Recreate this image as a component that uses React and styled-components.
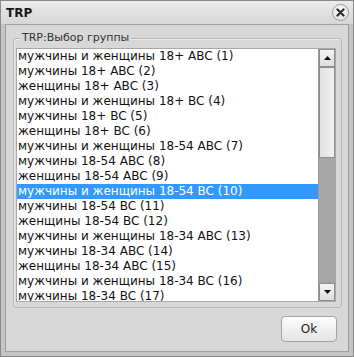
import styled, { createGlobalStyle } from "styled-components";
import { useState } from "react";

const GlobalStyle = createGlobalStyle`
  html, body {
    margin: 0;
    padding: 0;
    background: #ffffff;
  }
  * {
    box-sizing: border-box;
  }
`;

const ages = ["18+", "18-54", "18-34", "25-54", "35+", "45+", "55+"];
const genders = ["мужчины и женщины", "мужчины", "женщины"];

// собираем список групп: для каждого возраста сначала ABC, потом BC
const buildGroups = () => {
  const list = [];
  ages.forEach((age) => {
    ["ABC", "BC"].forEach((cls) => {
      genders.forEach((g) => {
        list.push(`${g} ${age} ${cls} (${list.length + 1})`);
      });
    });
  });
  return list;
};

const groups = buildGroups();

const App = () => {
  const [selected, setSelected] = useState(9);

  return (
    <>
      <GlobalStyle />
      <Window>
        <TitleBar>
          <Title>TRP</Title>
          <CloseButton>
            <svg width="9" height="9" viewBox="0 0 9 9">
              <path
                d="M1.5 1.5 L7.5 7.5 M7.5 1.5 L1.5 7.5"
                stroke="#2a2a2a"
                strokeWidth="2.2"
                strokeLinecap="round"
              />
            </svg>
          </CloseButton>
        </TitleBar>
        <Body>
          <GroupBox>
            <Legend>TRP:Выбор группы</Legend>
            <ListBox>
              <Items>
                {groups.map((name, i) => (
                  <Item
                    key={name}
                    $active={i === selected}
                    onClick={() => setSelected(i)}
                  >
                    {name}
                  </Item>
                ))}
              </Items>
              <ScrollBar>
                <ArrowButton>
                  <svg width="7" height="4" viewBox="0 0 7 4">
                    <path d="M0 4 L3.5 0 L7 4 Z" fill="#111" />
                  </svg>
                </ArrowButton>
                <Track>
                  <Thumb />
                </Track>
                <ArrowButton>
                  <svg width="7" height="4" viewBox="0 0 7 4">
                    <path d="M0 0 L7 0 L3.5 4 Z" fill="#111" />
                  </svg>
                </ArrowButton>
              </ScrollBar>
            </ListBox>
          </GroupBox>
          <Footer>
            <OkButton>Ok</OkButton>
          </Footer>
        </Body>
      </Window>
    </>
  );
};

export default App;

const Window = styled.div`
  width: 354px;
  height: 357px;
  display: flex;
  flex-direction: column;
  background: #c4c4c4;
  border: 1px solid #8a8a8a;
  padding: 0 4px 4px 4px;
  font-family: "DejaVu Sans", Verdana, sans-serif;
`;

const TitleBar = styled.div`
  height: 23px;
  margin: 0 -4px;
  padding: 0 4px 0 5px;
  display: flex;
  align-items: center;
  justify-content: space-between;
  background: linear-gradient(#ebebeb, #d6d6d6);
`;

const Title = styled.span`
  font-family: "DejaVu Sans", Verdana, sans-serif;
  font-weight: bold;
  font-size: 12px;
  color: #1a1a1a;
`;

const CloseButton = styled.div`
  width: 17px;
  height: 17px;
  border-radius: 50%;
  border: 1px solid #9a9a9a;
  background: radial-gradient(circle at 50% 35%, #ffffff, #d8d8d8);
  display: flex;
  align-items: center;
  justify-content: center;
`;

const Body = styled.div`
  flex: 1;
  display: flex;
  flex-direction: column;
  background: #d8d8d8;
  border: 1px solid #9e9e9e;
  padding: 13px 6px 9px 7px;
`;

const GroupBox = styled.div`
  position: relative;
  height: 270px;
  border: 1px solid #b8b8b8;
  border-radius: 3px;
  box-shadow: inset 1px 1px 0 #ececec;
  padding: 9px 5px 5px 2px;
`;

const Legend = styled.span`
  position: absolute;
  top: -8px;
  left: 6px;
  padding: 0 2px;
  background: #d8d8d8;
  font-size: 11px;
  line-height: 14px;
  color: #333;
`;

const ListBox = styled.div`
  height: 254px;
  display: flex;
  background: #ffffff;
  border: 1px solid #a8a8a8;
  overflow: hidden;
`;

const Items = styled.div`
  flex: 1;
  overflow: hidden;
`;

const Item = styled.div`
  height: 15px;
  line-height: 15px;
  padding-left: 1px;
  font-size: 12px;
  white-space: nowrap;
  cursor: default;
  color: ${(p) => (p.$active ? "#ffffff" : "#111111")};
  background: ${(p) => (p.$active ? "#3399ff" : "transparent")};
`;

const ScrollBar = styled.div`
  width: 17px;
  display: flex;
  flex-direction: column;
  border-left: 1px solid #9a9a9a;
  background: #a6a6a6;
`;

const ArrowButton = styled.div`
  height: 18px;
  display: flex;
  align-items: center;
  justify-content: center;
  background: linear-gradient(#f4f4f4, #dedede);
  border: 1px solid #8e8e8e;
`;

const Track = styled.div`
  flex: 1;
  display: flex;
  flex-direction: column;
`;

const Thumb = styled.div`
  height: 91px;
  background: linear-gradient(90deg, #e2e2e2, #f0f0f0);
  border: 1px solid #8e8e8e;
`;

const Footer = styled.div`
  flex: 1;
  display: flex;
  justify-content: flex-end;
  align-items: flex-end;
  padding-right: 5px;
`;

const OkButton = styled.button`
  width: 56px;
  height: 26px;
  border: 1px solid #a4a4a4;
  border-radius: 4px;
  background: linear-gradient(#fdfdfd, #e4e4e4);
  font-family: "DejaVu Sans", Verdana, sans-serif;
  font-size: 12px;
  color: #1a1a1a;
  padding: 0;
`;
